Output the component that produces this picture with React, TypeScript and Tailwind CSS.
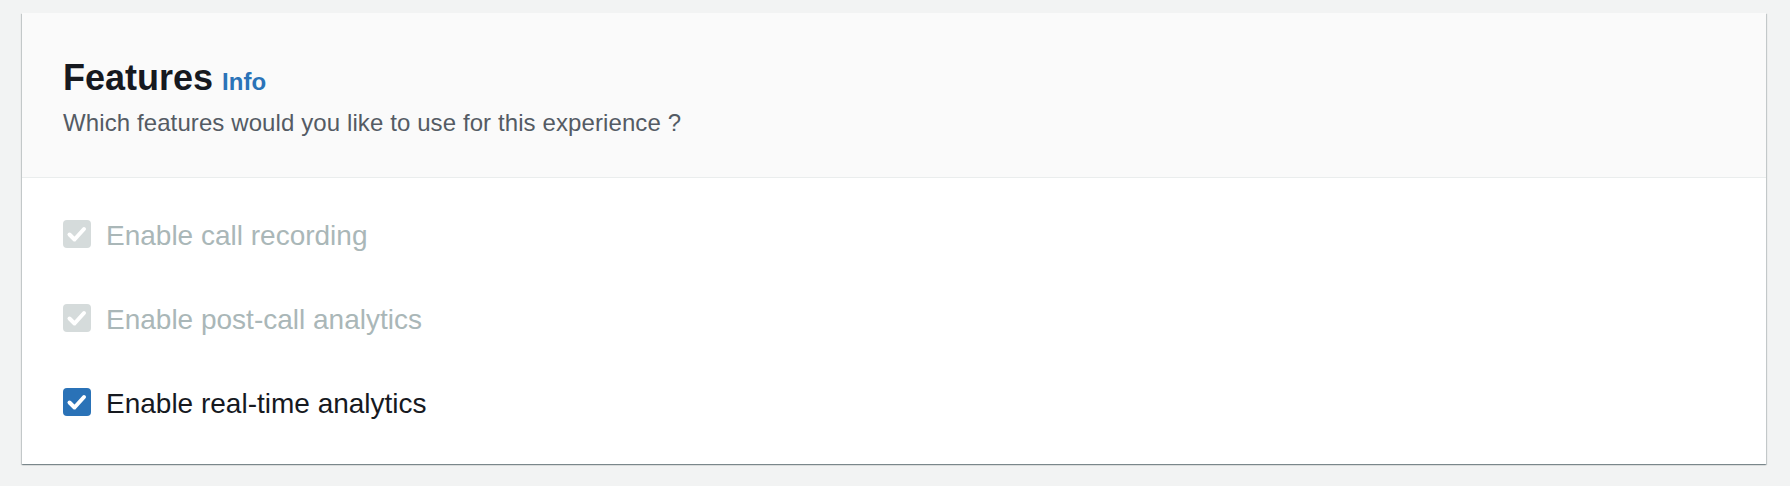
import React from "react";

function Check({ disabled, label }: { disabled?: boolean; label: string }) {
  return (
    <div className="flex items-start h-[40px]">
      <div
        className={`mt-[4px] w-[28px] h-[28px] rounded-[4px] flex items-center justify-center shrink-0 ${
          disabled ? "bg-[#d5dbdb]" : "bg-[#2a72b7]"
        }`}
      >
        <svg width="28" height="28" viewBox="0 0 28 28">
          <path
            d="M6.5 14.5 L11.5 19.5 L21 9"
            fill="none"
            stroke="#ffffff"
            strokeWidth="4"
            strokeLinecap="round"
            strokeLinejoin="round"
          />
        </svg>
      </div>
      <span
        className={`ml-[15px] text-[28px] leading-[40px] ${
          disabled ? "text-[#aab7b8]" : "text-[#16191f]"
        }`}
      >
        {label}
      </span>
    </div>
  );
}

export default function App() {
  return (
    <div
      className="bg-[#f2f3f3] w-[1790px] h-[486px] pl-[22px] pr-[24px] pt-[13px] pb-[22px]"
      style={{ fontFamily: '"Liberation Sans", Arial, sans-serif' }}
    >
      <div className="bg-white shadow-[0_1px_1px_0_rgba(0,28,36,0.3),1px_1px_1px_0_rgba(0,28,36,0.15),-1px_1px_1px_0_rgba(0,28,36,0.15)]">
        <div className="bg-[#fafafa] border-b border-[#eaeded] px-[41px] pt-[43px] pb-[38px]">
          <div className="flex items-baseline h-[44px]">
            <h2 className="text-[36px] leading-[44px] font-bold text-[#16191f]">
              Features
            </h2>
            <span className="ml-[9px] text-[24px] leading-[44px] font-bold text-[#2a73b8]">
              Info
            </span>
          </div>
          <p className="mt-[7px] text-[24px] leading-[32px] tracking-[0.1px] text-[#545b64]">
            Which features would you like to use for this experience ?
          </p>
        </div>
        <div className="px-[41px] pt-[38px] pb-[40px] flex flex-col gap-[44px]">
          <Check disabled label="Enable call recording" />
          <Check disabled label="Enable post-call analytics" />
          <Check label="Enable real-time analytics" />
        </div>
      </div>
    </div>
  );
}
